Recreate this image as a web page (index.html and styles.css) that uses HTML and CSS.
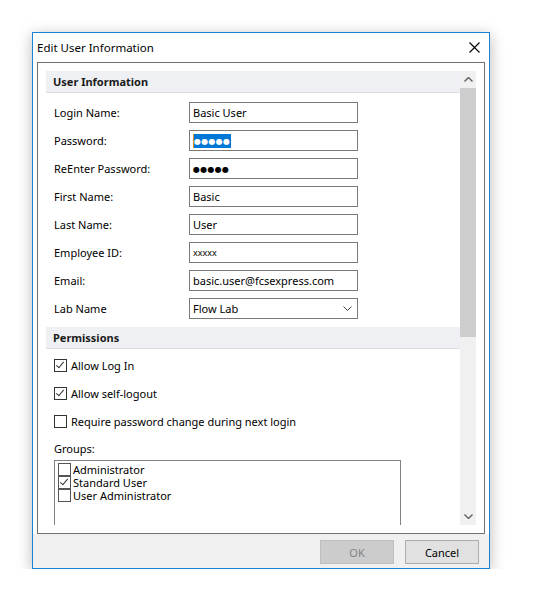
FILE: index.html
```html
<!DOCTYPE html>
<html lang="en">

<head>
  <meta charset="UTF-8">
  <title>Edit User Information</title>
  <link rel="stylesheet" href="styles.css">
</head>

<body>
  <div class="window">
    <div class="titlebar">
      <span class="title">Edit User Information</span>
      <svg class="close" width="11" height="11" viewBox="0 0 11 11">
        <path d="M0.5 0.5 L10.5 10.5 M10.5 0.5 L0.5 10.5" stroke="#000" stroke-width="1.1" fill="none" />
      </svg>
    </div>

    <div class="client">
      <div class="panel">
        <div class="scroller">
          <div class="content">
            <!-- User Information -->
            <div class="section-head">User Information</div>
            <div class="fields">
              <div class="row"><label>Login Name:</label><div class="input">Basic User</div></div>
              <div class="row"><label>Password:</label><div class="input"><span class="selected"><span class="dots">●●●●●</span></span></div></div>
              <div class="row"><label>ReEnter Password:</label><div class="input"><span class="dots">●●●●●</span></div></div>
              <div class="row"><label>First Name:</label><div class="input">Basic</div></div>
              <div class="row"><label>Last Name:</label><div class="input">User</div></div>
              <div class="row"><label>Employee ID:</label><div class="input small">xxxxx</div></div>
              <div class="row"><label>Email:</label><div class="input">basic.user@fcsexpress.com</div></div>
              <div class="row"><label>Lab Name</label>
                <div class="input select">Flow Lab
                  <svg class="chevron" width="9" height="5" viewBox="0 0 9 5">
                    <path d="M0.5 0.5 L4.5 4.5 L8.5 0.5" stroke="#444" fill="none" />
                  </svg>
                </div>
              </div>
            </div>

            <!-- Permissions -->
            <div class="section-head">Permissions</div>
            <div class="checks">
              <div class="check"><span class="box checked"></span>Allow Log In</div>
              <div class="check"><span class="box checked"></span>Allow self-logout</div>
              <div class="check"><span class="box"></span>Require password change during next login</div>
            </div>

            <div class="groups-label">Groups:</div>
            <div class="listbox">
              <div class="item"><span class="box"></span><span class="item-text">Administrator</span></div>
              <div class="item"><span class="box checked"></span><span class="item-text">Standard User</span></div>
              <div class="item"><span class="box"></span><span class="item-text">User Administrator</span></div>
            </div>
          </div>

          <div class="scrollbar">
            <div class="arrow">
              <svg width="9" height="5" viewBox="0 0 9 5"><path d="M0.5 4.5 L4.5 0.5 L8.5 4.5" stroke="#606060" stroke-width="1.4" fill="none" /></svg>
            </div>
            <div class="thumb"></div>
            <div class="track"></div>
            <div class="arrow">
              <svg width="9" height="5" viewBox="0 0 9 5"><path d="M0.5 0.5 L4.5 4.5 L8.5 0.5" stroke="#606060" stroke-width="1.4" fill="none" /></svg>
            </div>
          </div>
        </div>
      </div>
    </div>

    <div class="footer">
      <button class="btn btn-disabled">OK</button>
      <button class="btn">Cancel</button>
    </div>
  </div>
</body>

</html>
```

FILE: styles.css
```css
body {
  font-family: "Noto Sans", Arial, sans-serif;
  font-size: 11px;
  color: #000;
  background: #fff;
  margin: 0;
  padding: 32px 0 0 32px;
}

.window {
  width: 456px;
  height: 535px;
  border: 1px solid #1883d7;
  background: #fff;
  box-shadow: 0 3px 14px rgba(0, 0, 0, 0.28);
  display: flex;
  flex-direction: column;
}

.titlebar {
  height: 29px;
  flex: none;
  display: flex;
  align-items: center;
  justify-content: space-between;
  padding: 0 9px 0 4px;
  font-size: 11.5px;
}

.title {
  line-height: 16px;
}

.client {
  padding: 0 4px;
  flex: none;
}

.panel {
  height: 454px;
  border: 1px solid #717171;
  padding: 8px;
}

.scroller {
  height: 454px;
  display: flex;
  overflow: hidden;
}

.content {
  flex: 1;
  overflow: hidden;
}

.section-head {
  height: 21px;
  line-height: 21px;
  background: #eff0f4;
  border-bottom: 1px solid #dcdde2;
  padding-left: 7px;
  font-weight: bold;
  color: #1a1a1a;
}

.fields {
  padding: 9px 0 8px 8px;
  display: flex;
  flex-direction: column;
  gap: 7px;
}

.row {
  display: flex;
  align-items: center;
  height: 21px;
}

.row label {
  width: 135px;
}

.input {
  width: 161px;
  height: 19px;
  border: 1px solid #7a7a7a;
  padding: 0 3px;
  line-height: 19px;
  white-space: nowrap;
}

.input.small {
  font-size: 9px;
}

.input.select {
  display: flex;
  align-items: center;
  justify-content: space-between;
  padding-right: 5px;
  width: 159px;
}

.dots {
  font-family: "DejaVu Sans", sans-serif;
  font-size: 8px;
  letter-spacing: 0.3px;
  vertical-align: 1px;
}

.selected {
  display: inline-block;
  background: #0078d7;
  color: #fff;
  line-height: 13px;
  padding: 0 1px 0 0;
  border-left: 1px solid #e08a2c;
}

.checks {
  padding: 9px 0 0 8px;
  display: flex;
  flex-direction: column;
  gap: 13px;
}

.check {
  display: flex;
  align-items: center;
  height: 15px;
}

.box {
  width: 11px;
  height: 11px;
  border: 1px solid #333;
  background: #fff;
  margin-right: 4px;
  position: relative;
  flex: none;
}

.box.checked::after {
  content: "";
  position: absolute;
  left: 3px;
  top: 0px;
  width: 3px;
  height: 7px;
  border-right: 1px solid #333;
  border-bottom: 1px solid #333;
  transform: rotate(40deg);
}

.groups-label {
  padding: 11px 0 0 8px;
  height: 17px;
  line-height: 17px;
}

.listbox {
  margin: 3px 0 0 8px;
  width: 342px;
  height: 90px;
  border: 1px solid #828282;
  padding: 2px 0 0 3px;
}

.item {
  display: flex;
  align-items: center;
  height: 13px;
}

.item-text {
  line-height: 12px;
}

.item .box {
  border-color: #555;
  margin-right: 2px;
}

.scrollbar {
  width: 16px;
  background: #f0f0f0;
  display: flex;
  flex-direction: column;
}

.arrow {
  height: 17px;
  display: flex;
  align-items: center;
  justify-content: center;
}

.thumb {
  height: 249px;
  background: #cdcdcd;
}

.track {
  flex: 1;
}

.footer {
  flex: 1;
  background: #f0f0f0;
  display: flex;
  justify-content: flex-end;
  align-items: flex-start;
  gap: 11px;
  padding: 6px 10px 0 0;
}

.btn {
  width: 74px;
  height: 24px;
  font-family: inherit;
  font-size: 11px;
  background: #e1e1e1;
  border: 1px solid #adadad;
  color: #000;
  padding: 0;
}

.btn-disabled {
  background: #cccccc;
  border-color: #bfbfbf;
  color: #838383;
}
```
